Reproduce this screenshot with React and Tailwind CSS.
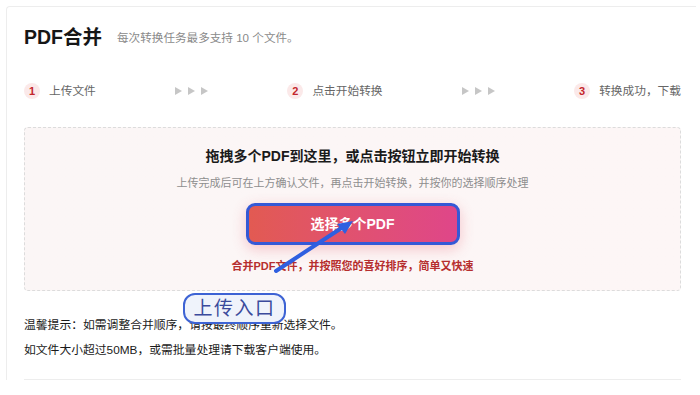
const FONT = { fontFamily: '"Liberation Sans", "Noto Sans CJK SC", sans-serif' }

function Arrows() {
  return (
    <div className="flex items-center gap-[6px]">
      {[0, 1, 2].map((i) => (
        <svg key={i} width="7" height="8" viewBox="0 0 7 8">
          <polygon points="0,0 7,4 0,8" fill="#c6c6c6" />
        </svg>
      ))}
    </div>
  )
}

function Step({ n, label }) {
  return (
    <div className="flex items-center gap-[9px]">
      <span className="w-[16px] h-[16px] rounded-full bg-[#fbe9e9] flex items-center justify-center text-[11px] font-bold text-[#c3262c] leading-none">
        {n}
      </span>
      <span className="text-[11.7px] text-[#666] leading-none">{label}</span>
    </div>
  )
}

export default function App() {
  return (
    <div className="relative w-[700px] h-[395px] overflow-hidden bg-white pt-[6px] pl-[6px] pr-[4px]" style={FONT}>
      <div className="border-l border-t border-[#ededed] rounded-tl-[4px] pl-[17px] pr-[15px] pt-[19px]">
        <div className="flex items-center h-[24px]">
          <h1 className="text-[19.5px] font-bold text-[#161616] leading-none">PDF合并</h1>
          <span className="ml-[15px] text-[11.6px] text-[#8a8a8a] leading-none">每次转换任务最多支持 10 个文件。</span>
        </div>

        <div className="flex items-center justify-between h-[16px] mt-[33px]">
          <Step n="1" label="上传文件" />
          <Arrows />
          <Step n="2" label="点击开始转换" />
          <Arrows />
          <Step n="3" label="转换成功，下载" />
        </div>

        <div className="mt-[28px] h-[164px] rounded-[4px] border border-dashed border-[#dcdcdc] bg-gradient-to-r from-[#fbf6f6] to-[#fdf6f6] flex flex-col items-center pt-[18px]">
          <div className="h-[20px] flex items-center text-[14px] font-bold text-[#1a1a1a]">拖拽多个PDF到这里，或点击按钮立即开始转换</div>
          <div className="mt-[9px] h-[16px] flex items-center text-[11px] text-[#8e8e8e]">上传完成后可在上方确认文件，再点击开始转换，并按你的选择顺序处理</div>
          <button className="mt-[12px] w-[214px] h-[42px] rounded-[9px] border-[3px] border-[#3559d6] bg-gradient-to-r from-[#e25a52] to-[#df4689] text-white text-[14px] font-bold shadow-[0_4px_14px_rgba(228,80,100,0.3)]">
            选择多个PDF
          </button>
          <div className="mt-[13px] h-[16px] flex items-center text-[11px] font-semibold text-[#b62e2e]">合并PDF文件，并按照您的喜好排序，简单又快速</div>
        </div>

        <div className="mt-[22px] text-[11.8px] text-[#1a1a1a] leading-[25px]">
          <p>温馨提示：如需调整合并顺序，请按最终顺序重新选择文件。</p>
          <p>如文件大小超过50MB，或需批量处理请下载客户端使用。</p>
        </div>

        <div className="mt-[16px] border-b border-[#ededed]" />
      </div>

      <svg className="absolute inset-0 pointer-events-none" width="700" height="395">
        <line x1="276" y1="271" x2="343" y2="227" stroke="#2f5fe0" strokeWidth="4" strokeLinecap="round" />
        <polygon points="353,221 337,224 345,234" fill="#2f5fe0" />
      </svg>

      <div className="absolute left-[183px] top-[293px] w-[103px] h-[31px] rounded-[12px] border-2 border-[#3d63d4] bg-[#eff3fb] flex items-center justify-center text-[19px] text-[#3a4a9c] tracking-[1.5px] leading-none">
        上传入口
      </div>
    </div>
  )
}
